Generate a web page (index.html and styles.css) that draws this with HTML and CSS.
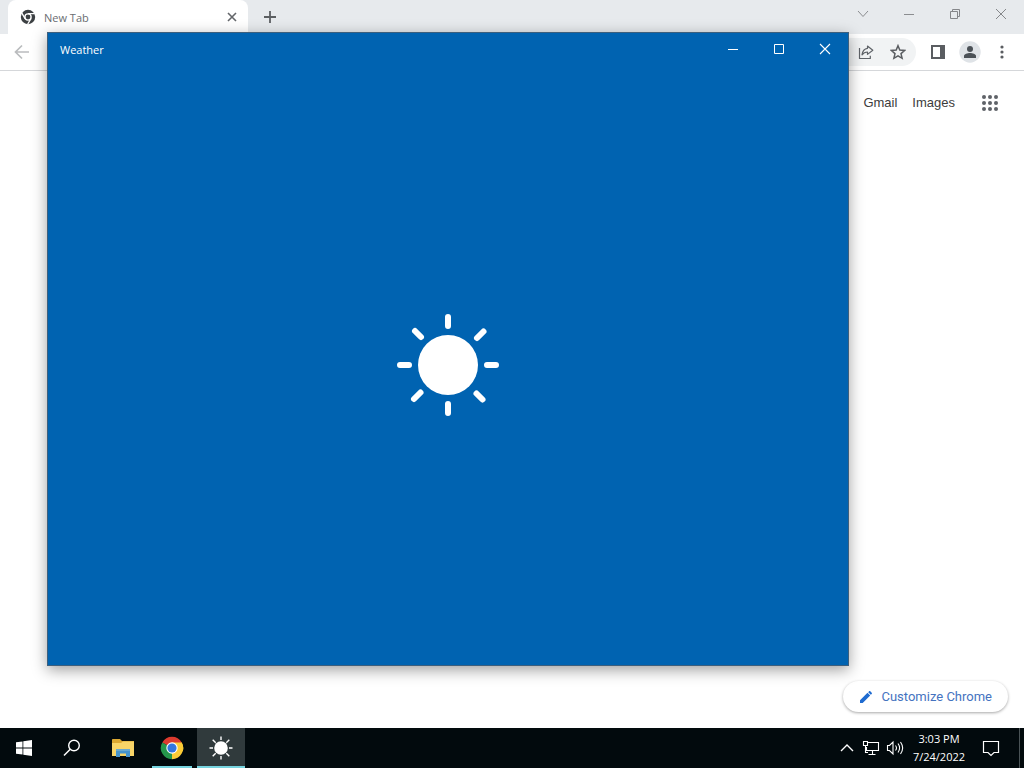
FILE: index.html
```html
<!DOCTYPE html>
<html lang="en">
<head>
<meta charset="utf-8">
<title>Desktop</title>
<link rel="stylesheet" href="styles.css">
</head>
<body class="desktop">
<main class="browser">
  <header class="tab-strip">
    <div class="tab">
      <svg class="tab-logo" width="16" height="16" viewBox="0 0 16 16"><circle cx="8" cy="8" r="7.2" fill="#3c4043"/><circle cx="8" cy="8" r="3.800" fill="#fff"/><circle cx="8" cy="8" r="2.400" fill="#3c4043"/><path d="M8 4.700h6.800M5.100 9.600 1.700 3.800M10.900 9.600 7.500 15.500" stroke="#fff" stroke-width="1.300"/></svg>
      <span class="tab-title">New Tab</span>
      <button class="tab-close" aria-label="Close tab"><svg width="10" height="10" viewBox="0 0 10 10"><path d="M1 1l8 8M9 1l-8 8" stroke="#63666a" stroke-width="1.600"/></svg></button>
    </div>
    <button class="new-tab" aria-label="New tab"><svg width="14" height="14" viewBox="0 0 14 14"><path d="M7 1v12M1 7h12" stroke="#5c5f62" stroke-width="1.800"/></svg></button>
    <div class="controls browser-controls">
      <button aria-label="Search tabs"><svg width="12" height="12" viewBox="0 0 12 12"><path d="M1 3l5 5.500 5-5.500" fill="none" stroke="#8b8d90"/></svg></button>
      <button aria-label="Minimize"><svg width="12" height="12" viewBox="0 0 12 12"><path d="M1 6.500h10" stroke="#8b8d90"/></svg></button>
      <button aria-label="Restore"><svg width="12" height="12" viewBox="0 0 12 12"><path d="M1.500 3.500h7v7h-7zM3.500 3.500v-2h7v7h-2" fill="none" stroke="#85878a"/></svg></button>
      <button aria-label="Close"><svg width="12" height="12" viewBox="0 0 12 12"><path d="M1 1l10 10M11 1L1 11" stroke="#85878a"/></svg></button>
    </div>
  </header>
  <nav class="toolbar">
    <button class="tool" aria-label="Back"><svg width="16" height="16" viewBox="0 0 16 16"><path d="M15 8H2M8 1.500L1.500 8 8 14.500" fill="none" stroke="#babcbe" stroke-width="1.700"/></svg></button>
    <div class="address">
      <button class="tool" aria-label="Share"><svg width="16" height="16" viewBox="0 0 16 16"><path d="M1.500 4v10.500h10.800v-2.700M9.500 2l5.300 4.200-5.300 4.200V8C7.200 8 5.500 8.700 4 10.800 4.500 7.200 6.400 4.700 9.500 4.300z" fill="none" stroke="#5f6368" stroke-width="1.200" stroke-linejoin="round"/></svg></button>
      <button class="tool" aria-label="Bookmark"><svg width="16" height="16" viewBox="0 0 16 16"><path d="M8 1.700l1.800 4.400 4.800.4-3.600 3.100 1.100 4.700L8 11.800l-4.100 2.500L5 9.600 1.400 6.500l4.800-.4z" fill="none" stroke="#5a5d61" stroke-width="1.500"/></svg></button>
    </div>
    <button class="tool" aria-label="Side panel"><svg width="14" height="14" viewBox="0 0 14 14"><path d="M0 0h14v14H0zM2 2v10h7V2z" fill="#5a5d61" fill-rule="evenodd"/></svg></button>
    <button class="tool" aria-label="Profile"><svg width="22" height="22" viewBox="0 0 22 22"><circle cx="11" cy="11" r="10.700" fill="#dfe3e7"/><circle cx="11" cy="8" r="3" fill="#4b5157"/><path d="M5 17v-2c0-2 3.500-3 6-3s6 1 6 3v2z" fill="#4b5157"/></svg></button>
    <button class="tool" aria-label="Menu"><svg width="4" height="14" viewBox="0 0 4 14"><g fill="#5a5d61"><circle cx="2" cy="2" r="1.600"/><circle cx="2" cy="7" r="1.600"/><circle cx="2" cy="12" r="1.600"/></g></svg></button>
  </nav>
  <section class="page">
    <nav class="links">
      <a href="#gmail">Gmail</a>
      <a href="#images">Images</a>
      <button class="apps" aria-label="Google apps"><svg width="18" height="18" viewBox="0 0 18 18"><g fill="#5f6368"><circle cx="3" cy="3" r="2"/><circle cx="9" cy="3" r="2"/><circle cx="15" cy="3" r="2"/><circle cx="3" cy="9" r="2"/><circle cx="9" cy="9" r="2"/><circle cx="15" cy="9" r="2"/><circle cx="3" cy="15" r="2"/><circle cx="9" cy="15" r="2"/><circle cx="15" cy="15" r="2"/></g></svg></button>
    </nav>
    <button class="customize"><svg width="14" height="14" viewBox="0 0 14 14"><path d="M1 10.300V13h2.700l7.500-7.500-2.700-2.700zM12.700 3.900c.4-.4.400-.8 0-1.200l-1.400-1.400c-.4-.4-.8-.4-1.200 0L9.200 2.200l2.600 2.600z" fill="#1f6bd0"/></svg>Customize Chrome</button>
  </section>
</main>

<section class="weather">
  <header class="weather-bar">
    <h1 class="weather-title">Weather</h1>
    <div class="controls">
      <button aria-label="Minimize"><svg width="12" height="12" viewBox="0 0 12 12"><path d="M1 6.500h10" stroke="#fff"/></svg></button>
      <button aria-label="Maximize"><svg width="12" height="12" viewBox="0 0 12 12"><path d="M1.500 1.500h9v9h-9z" fill="none" stroke="#fff"/></svg></button>
      <button aria-label="Close"><svg width="12" height="12" viewBox="0 0 12 12"><path d="M1 1l10 10M11 1L1 11" stroke="#fff" stroke-width="1.100"/></svg></button>
    </div>
  </header>
  <div class="splash">
    <svg width="104" height="104" viewBox="0 0 104 104"><circle cx="52" cy="52" r="30" fill="#fff"/><path d="M52 4v9M52 91v9M4 52h9M91 52h9M19 18l6 6M87.500 18.500l-6.500 6.500M24.500 79.500l-6.500 6.500M80.500 80.500l6 6" stroke="#fff" stroke-width="6" stroke-linecap="round"/></svg>
  </div>
</section>

<footer class="taskbar">
  <div class="system">
    <button class="task" aria-label="Start"><svg width="16" height="16" viewBox="0 0 16 16"><path d="M0 2.300l6.500-.9v6.100H0zM7.300 1.300L16 0v7.500H7.300zM0 8.400h6.500v6.200L0 13.700zM7.300 8.400H16V16l-8.700-1.300z" fill="#fff"/></svg></button>
    <button class="task" aria-label="Search"><svg width="18" height="18" viewBox="0 0 18 18"><circle cx="11" cy="6.500" r="5.300" fill="none" stroke="#fff" stroke-width="1.400"/><path d="M7.200 10.300L1 16.500" stroke="#fff" stroke-width="1.500"/></svg></button>
  </div>
  <div class="apps-row">
    <button class="task" aria-label="File Explorer"><svg width="22" height="18" viewBox="0 0 22 18"><path d="M0 1c0-.6.400-1 1-1h7l2 2h12v15H0z" fill="#dba832"/><path d="M0 4h9l2-1.500h11V17H0z" fill="#f8d568"/><path d="M4 18v-8h14v8h-4v-3.500H8V18z" fill="#4694cc"/><path d="M4 10h14v2H4z" fill="#6aa9cf"/></svg></button>
    <button class="task running" aria-label="Chrome"><svg width="24" height="24" viewBox="0 0 24 24"><path d="M12 12L2.300 6.400A11.200 11.200 0 0 1 21.700 6.400z" fill="#dc3b2f"/><path d="M12 12L2.300 6.400A11.200 11.200 0 0 0 12 23.200z" fill="#24964b"/><path d="M12 12L12 23.200A11.200 11.200 0 0 0 21.700 6.400z" fill="#fccc36"/><path d="M12 6.400h9.700L12 12z" fill="#dc3b2f"/><path d="M16.900 14.800L12 23.200V12z" fill="#fccc36"/><path d="M12 6.400h9.700a11.200 11.200 0 0 1 1.200 8.500L17 14z" fill="#fccc36"/><circle cx="12" cy="12" r="5.700" fill="#fff"/><circle cx="12" cy="12" r="4.600" fill="#3476df"/></svg></button>
    <button class="task running active" aria-label="Weather"><svg width="24" height="24" viewBox="0 0 24 24"><circle cx="12" cy="12" r="6.800" fill="#fff"/><path d="M12 .5v3.500M12 20v3.500M.5 12h3.500M20 12h3.500M3.700 3.700l3 3M20.300 3.700l-3 3M3.700 20.300l3-3M20.300 20.300l-3-3" stroke="#fff" stroke-width="1.400"/></svg></button>
  </div>
  <div class="tray">
    <button class="tray-icon" aria-label="Show hidden icons"><svg width="14" height="14" viewBox="0 0 14 14"><path d="M1 10l6-6 6 6" fill="none" stroke="#fff" stroke-width="1.400"/></svg></button>
    <button class="tray-icon" aria-label="Network"><svg width="18" height="16" viewBox="0 0 18 16"><path d="M6 2.500h10.500v8H4.500V7M10.500 10.500v4M6.500 14.500h7M1.500 1.500h4v4h-4zM3.500 5.500v7h2.500" fill="none" stroke="#fff" stroke-width="1.100"/></svg></button>
    <button class="tray-icon" aria-label="Volume"><svg width="18" height="16" viewBox="0 0 18 16"><path d="M1.500 5.500h2L7 2v12l-3.500-3.500h-2zM9.500 5.500q2 2.500 0 5M12 3.500q3.200 4.500 0 9M14.500 2q4.300 6 0 12" fill="none" stroke="#fff" stroke-width="1.100"/></svg></button>
    <button class="clock"><span>3:03 PM</span><span>7/24/2022</span></button>
    <button class="notices" aria-label="Notifications"><svg width="18" height="18" viewBox="0 0 18 18"><path d="M1.500 2.500h15v11h-4.500l-3 3-3-3H1.500z" fill="none" stroke="#fff" stroke-width="1.200"/></svg></button>
    <button class="show-desktop" aria-label="Show desktop"></button>
  </div>
</footer>
</body>
</html>
```
FILE: styles.css
```css
* {
  box-sizing: border-box;
}

button {
  display: flex;
  align-items: center;
  justify-content: center;
  padding: 0;
  border: 0;
  background: none;
  color: inherit;
  font: inherit;
}

svg {
  display: block;
  flex: none;
}

.desktop {
  position: relative;
  display: flex;
  flex-direction: column;
  min-height: 100vh;
  margin: 0;
  overflow: hidden;
  font-family: "Open Sans", "Noto Sans", sans-serif;
  font-size: 11px;
}

.browser {
  display: flex;
  flex: 1;
  flex-direction: column;
  background: #fff;
}

.tab-strip {
  display: flex;
  height: 34px;
  padding-left: 8px;
  background: #e7eaed;
}

.tab {
  display: flex;
  flex: 0 1 240px;
  align-items: center;
  gap: 8px;
  padding: 0 8px 0 12px;
  border-radius: 8px 8px 0 0;
  background: #fff;
  color: #6a6d71;
}

.tab-title {
  flex: 1;
}

.tab-close {
  width: 16px;
  height: 16px;
}

.new-tab {
  width: 28px;
  margin-left: 8px;
}

.controls {
  display: flex;
  margin-left: auto;
}

.controls button {
  width: 46px;
}

.browser-controls {
  height: 28px;
}

.toolbar {
  display: flex;
  align-items: center;
  height: 37px;
  padding: 0 6px;
  border-bottom: 1px solid #d5d7da;
}

.tool {
  width: 32px;
  height: 28px;
}

.address {
  display: flex;
  flex: 1;
  justify-content: flex-end;
  margin: 0 6px 0 70px;
  padding-right: 2px;
  border-radius: 14px;
  background: #f1f3f4;
}

.page {
  display: flex;
  flex: 1;
  flex-direction: column;
  justify-content: space-between;
  align-items: flex-end;
  padding: 0 16px 16px;
}

.links {
  display: flex;
  align-items: center;
  gap: 15px;
  height: 64px;
  font-family: "Liberation Sans", Arial, sans-serif;
  font-size: 13px;
}

.links a {
  padding-bottom: 2px;
  color: #3c3c3c;
  text-decoration: none;
}

.apps {
  width: 36px;
  height: 36px;
  margin-left: 2px;
}

.customize {
  gap: 8px;
  height: 31px;
  padding: 0 16px;
  border-radius: 16px;
  background: #fff;
  box-shadow: 0 1px 3px rgba(0, 0, 0, 0.35);
  color: #4573bf;
  font-family: Roboto, sans-serif;
  font-size: 13px;
}

.weather {
  position: absolute;
  top: 32px;
  right: 175px;
  bottom: 102px;
  left: 47px;
  display: flex;
  flex-direction: column;
  border: 1px solid #3d5f7d;
  background: #0063b1;
  box-shadow: 0 4px 14px rgba(0, 0, 0, 0.38);
  color: #fff;
}

.weather-bar {
  display: flex;
  align-items: stretch;
  height: 32px;
  padding-left: 12px;
}

.weather-title {
  align-self: center;
  margin: 0;
  font-size: 11px;
  font-weight: 400;
}

.splash {
  display: flex;
  flex: 1;
  align-items: center;
  justify-content: center;
}

.taskbar {
  display: flex;
  height: 40px;
  background: #020a0d;
  color: #fff;
}

.system,
.apps-row,
.tray {
  display: flex;
}

.apps-row {
  gap: 1px;
  margin-left: 3px;
}

.task {
  width: 48px;
}

.running {
  background: linear-gradient(#76d4df, #76d4df) bottom / 40px 2px no-repeat;
}

.active {
  background-color: #303a3c;
  background-size: 100% 2px;
}

.tray {
  margin-left: auto;
}

.tray-icon {
  width: 24px;
}

.clock {
  flex-direction: column;
  width: 64px;
  line-height: 18px;
}

.notices {
  width: 40px;
}

.show-desktop {
  width: 5px;
  margin-left: 8px;
  border-left: 1px solid #4a5356;
}
```
